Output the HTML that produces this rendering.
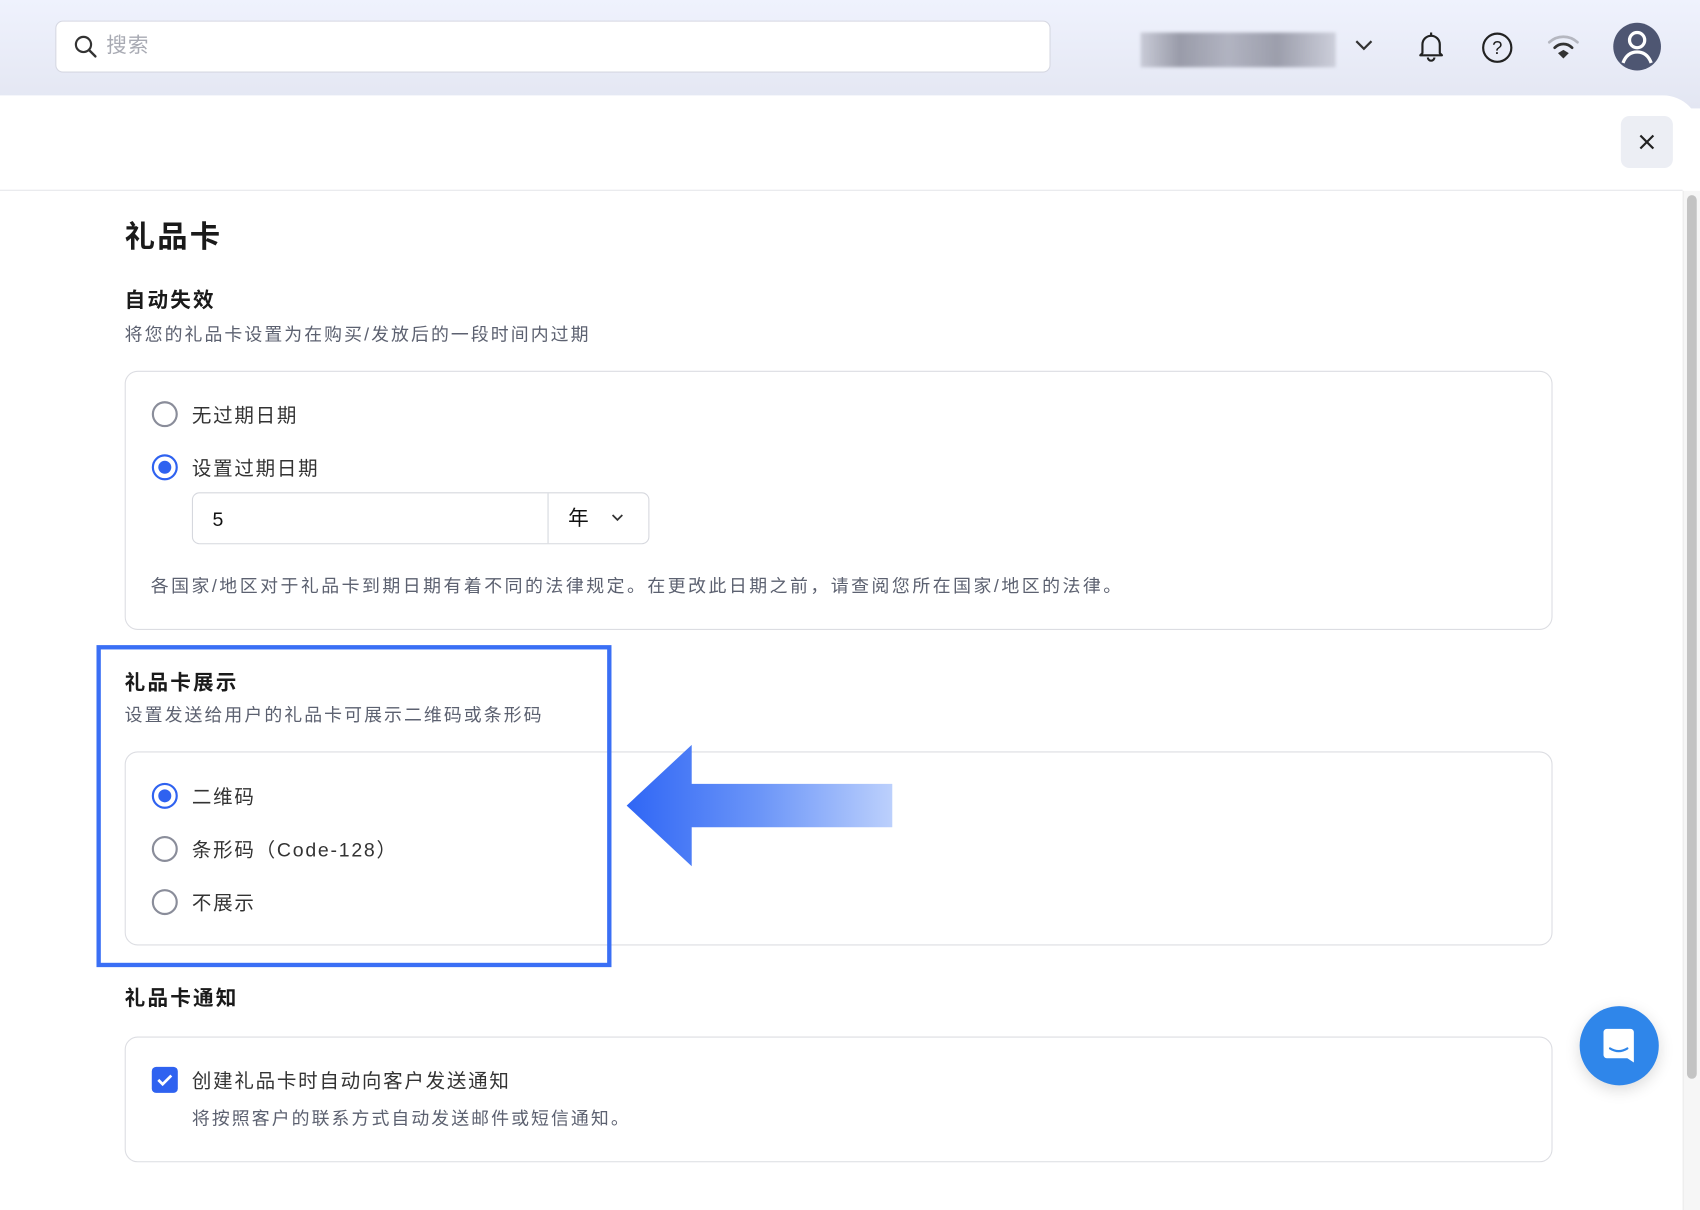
<!DOCTYPE html>
<html><head><meta charset="utf-8"><style>
html,body{margin:0;padding:0;width:1700px;height:1210px;overflow:hidden;background:#fff}
#w{position:absolute;left:0;top:0;width:1568px;height:1116px;transform:scale(1.08418,1.08423);transform-origin:0 0;font-family:"Liberation Sans","Noto Sans CJK SC",sans-serif;color:#1f1f1f}
.a{position:absolute}
.top{left:0;top:0;width:1568px;height:100px;background:linear-gradient(#eff2fd,#e3e6f2)}
.panel{left:0;top:88px;width:1568px;height:1028px;background:#fff;border-top-right-radius:34px}
.t{position:absolute;white-space:nowrap;line-height:1}
.box{position:absolute;left:115px;width:1315px;border:1.5px solid #dcdde2;border-radius:12px}
.r{position:absolute;left:140px;width:24px;height:24px;border:2.5px solid #8a8d9a;border-radius:50%;box-sizing:border-box}
.r.on{border-color:#2f62f0}
.r.on::after{content:"";position:absolute;left:3.5px;top:3.5px;width:12px;height:12px;border-radius:50%;background:#2f62f0}
.lb{font-size:18px;color:#333;left:177px;letter-spacing:1.6px}
.sub{font-size:16.5px;color:#5c6170;letter-spacing:1.9px}
.h{font-size:19px;font-weight:bold;color:#1a1a1a;left:115px;letter-spacing:2px}
</style></head><body><div id="w">
<div class="a top"></div>
<div class="a" style="left:51px;top:19px;width:916px;height:46px;background:#fff;border:1px solid #d6d8e2;border-radius:7px"></div>
<svg class="a" style="left:67px;top:31px" width="24" height="24" viewBox="0 0 24 24"><circle cx="10" cy="10" r="7" fill="none" stroke="#333" stroke-width="2"/><path d="M15 15l6 6" stroke="#333" stroke-width="2.2" stroke-linecap="round"/></svg>
<div class="t" style="left:98px;top:33px;font-size:19px;color:#a8aab3;letter-spacing:1px">搜索</div>
<div class="a" style="left:1052px;top:30px;width:180px;height:32px;background:linear-gradient(90deg,#c4c6d2,#8c8e9c 20%,#a8aab8 45%,#8f919f 70%,#c8cad6);filter:blur(1.5px);opacity:.85"></div>
<svg class="a" style="left:1249px;top:34px" width="18" height="14"><path d="M2 4l7 7 7-7" fill="none" stroke="#333" stroke-width="2"/></svg>
<svg class="a" style="left:1306px;top:28px" width="28" height="30" viewBox="0 0 28 30"><path d="M6 21V13a8 8 0 0 1 16 0v8l2 2H4z" fill="none" stroke="#222" stroke-width="2" stroke-linejoin="round"/><path d="M14 2v3M11 25a3 3 0 0 0 6 0" fill="none" stroke="#222" stroke-width="2"/></svg>
<svg class="a" style="left:1366px;top:29px" width="30" height="30"><circle cx="15" cy="15" r="13" fill="none" stroke="#222" stroke-width="2"/><text x="15" y="21" text-anchor="middle" font-size="17" font-family="Liberation Sans" fill="#222">?</text></svg>
<svg class="a" style="left:1426px;top:30px" width="32" height="26" viewBox="0 0 32 26"><path d="M3 9a19 19 0 0 1 26 0" fill="none" stroke="#b5b7c0" stroke-width="2.5" stroke-linecap="round"/><path d="M8 14a11 11 0 0 1 16 0" fill="none" stroke="#333" stroke-width="2.5" stroke-linecap="round"/><path d="M11 19l5-3 5 3-5 5z" fill="#333"/></svg>
<svg class="a" style="left:1487px;top:20px" width="46" height="46" viewBox="0 0 46 46"><circle cx="23" cy="23" r="22" fill="#4e5672"/><circle cx="23" cy="17" r="7" fill="none" stroke="#fff" stroke-width="3"/><path d="M10 38c3-8 8-10 13-10s10 2 13 10" fill="none" stroke="#fff" stroke-width="3"/></svg>
<div class="a panel"></div>
<div class="a" style="left:0;top:175px;width:1552px;height:1px;background:#e6e7ea"></div>
<div class="a" style="left:1495px;top:107px;width:48px;height:48px;background:#eceef4;border-radius:8px"></div>
<svg class="a" style="left:1510px;top:122px" width="18" height="18"><path d="M3 3l12 12M15 3L3 15" stroke="#222" stroke-width="2"/></svg>
<div class="a" style="left:1552px;top:176px;width:16px;height:940px;background:#f6f6f6;border-left:1px solid #ebebeb"></div>
<div class="a" style="left:1556px;top:180px;width:9px;height:815px;background:#c3c3c3;border-radius:5px"></div>

<div class="t" style="left:115px;top:205px;font-size:28px;font-weight:bold;color:#1a1a1a;letter-spacing:2px">礼品卡</div>
<div class="t h" style="top:268px">自动失效</div>
<div class="t sub" style="left:115px;top:301px">将您的礼品卡设置为在购买/发放后的一段时间内过期</div>
<div class="box" style="top:342px;height:237px"></div>
<div class="r" style="top:370px"></div><div class="t lb" style="top:374px">无过期日期</div>
<div class="r on" style="top:419px"></div><div class="t lb" style="top:423px">设置过期日期</div>
<div class="a" style="left:177px;top:454px;width:420px;height:46px;border:1.5px solid #d6d8de;border-radius:7px"></div>
<div class="a" style="left:505px;top:455px;width:1px;height:46px;background:#d6d8de"></div>
<div class="t" style="left:196px;top:470px;font-size:18px;color:#111">5</div>
<div class="t" style="left:524px;top:469px;font-size:19px;color:#111">年</div>
<svg class="a" style="left:563px;top:473px" width="13" height="10"><path d="M2 2l4.5 4.5L11 2" fill="none" stroke="#333" stroke-width="1.6"/></svg>
<div class="t sub" style="left:139px;top:533px;letter-spacing:2.3px">各国家/地区对于礼品卡到期日期有着不同的法律规定。在更改此日期之前，请查阅您所在国家/地区的法律。</div>

<div class="t h" style="top:621px">礼品卡展示</div>
<div class="t sub" style="left:115px;top:652px">设置发送给用户的礼品卡可展示二维码或条形码</div>
<div class="box" style="top:693px;height:177px"></div>
<div class="r on" style="top:722px"></div><div class="t lb" style="top:726px">二维码</div>
<div class="r" style="top:771px"></div><div class="t lb" style="top:775px">条形码（Code-128）</div>
<div class="r" style="top:820px"></div><div class="t lb" style="top:824px">不展示</div>
<div class="a" style="left:89px;top:595px;width:467px;height:289px;border:4px solid #3a6ff5"></div>
<svg class="a" style="left:575px;top:684px" width="252" height="120"><defs><linearGradient id="g" x1="0" x2="1"><stop offset="0" stop-color="#2f66f5"/><stop offset=".5" stop-color="#6b95f8"/><stop offset="1" stop-color="#bcd0fc"/></linearGradient></defs><path d="M3 59L63 3v36h185v40H63v36z" fill="url(#g)"/></svg>

<div class="t h" style="top:912px">礼品卡通知</div>
<div class="box" style="top:956px;height:114px"></div>
<div class="a" style="left:140px;top:984px;width:24px;height:24px;background:#2f62f0;border-radius:4px"></div>
<svg class="a" style="left:140px;top:984px" width="24" height="24"><path d="M6 12l4 4 8-8" fill="none" stroke="#fff" stroke-width="2.5"/></svg>
<div class="t lb" style="top:988px">创建礼品卡时自动向客户发送通知</div>
<div class="t sub" style="left:177px;top:1024px">将按照客户的联系方式自动发送邮件或短信通知。</div>

<div class="a" style="left:1457px;top:928px;width:73px;height:73px;border-radius:50%;background:#2f86ea;box-shadow:0 4px 14px rgba(0,0,0,.15)"></div>
<svg class="a" style="left:1476px;top:947px" width="36" height="36" viewBox="0 0 36 36"><path d="M3 5a3 3 0 0 1 3-3h22a3 3 0 0 1 3 3v28l-6-4H6a3 3 0 0 1-3-3z" fill="#fff"/><path d="M9 20q8 5 16 0" fill="none" stroke="#2f86ea" stroke-width="2" stroke-linecap="round"/></svg>
</div></body></html>
